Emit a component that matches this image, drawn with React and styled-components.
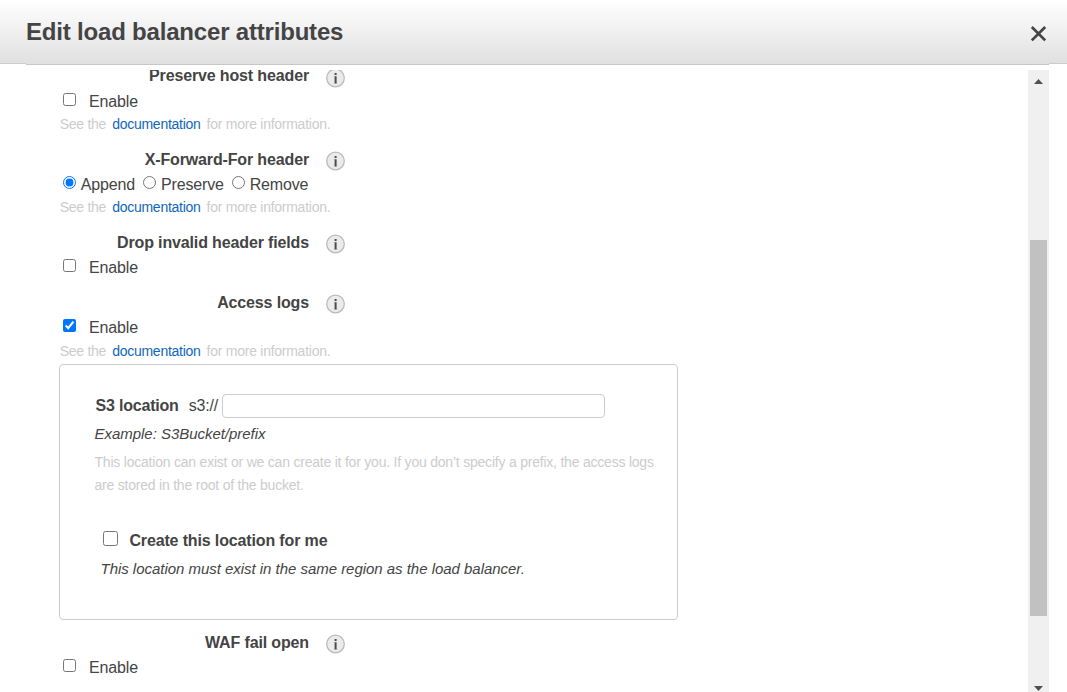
import React from "react";
import styled, { createGlobalStyle } from "styled-components";

const GlobalStyle = createGlobalStyle`
  * { box-sizing: border-box; }
  body {
    margin: 0;
    overflow: hidden;
    background: #fff;
    color: #444;
    font-family: "Liberation Sans", Arial, sans-serif;
    font-size: 16px;
    letter-spacing: -0.14px;
  }
`;

const Dialog = styled.div`
  display: flex;
  flex-direction: column;
  width: 1067px;
  height: 692px;
`;

const Header = styled.header`
  flex: none;
  height: 64px;
  padding: 0 18px 0 26px;
  border-bottom: 1px solid #ccc;
  background: linear-gradient(#fff, #e0e0e0);
`;

const TitleBar = styled.div`
  display: flex;
  justify-content: space-between;
  height: 65px;
  border-bottom: 1px solid #c6c6c6;
  background: linear-gradient(#fff, #e0e0e0);
`;

const Title = styled.h1`
  margin: 0;
  font-size: 24px;
  line-height: 28px;
  padding-top: 18px;
  white-space: nowrap;
  letter-spacing: -0.19px;
`;

const CloseButton = styled.button`
  display: block;
  width: 17px;
  height: 17px;
  margin: 25px 2px 0 0;
  padding: 0;
  border: 0;
  background: none;
  svg { display: block; }
`;

const Content = styled.div`
  display: flex;
  justify-content: space-between;
  flex: 1;
  min-height: 0;
  margin-top: 6px;
  padding-right: 18px;
  overflow: hidden;
`;

const Form = styled.form`
  width: 620px;
  margin: -7px 0 0 59px;
`;

const Field = styled.section`
  margin-bottom: ${(p) => p.$gap ?? 11}px;
`;

const LabelRow = styled.div`
  display: flex;
  justify-content: space-between;
  width: 286px;
  height: 26px;
`;

const Label = styled.div`
  width: 250px;
  text-align: right;
  font-weight: bold;
  line-height: ${(p) => p.$line ?? 28}px;
  white-space: nowrap;
`;

const InfoIcon = styled.svg`
  display: block;
  width: 20px;
  height: 20px;
  margin-top: 5px;
`;

const ChoiceRow = styled.div`
  display: flex;
  height: 24px;
  padding-left: 4px;
  line-height: 26px;
`;

const Choice = styled.label`
  display: flex;
  gap: ${(p) => p.$gap}px;
  margin-right: 8px;
  white-space: nowrap;
`;

const Tick = styled.input`
  flex: none;
  width: ${(p) => p.$size ?? 13}px;
  height: ${(p) => p.$size ?? 13}px;
  margin: ${(p) => p.$top ?? 4}px 0 0;
`;

const Help = styled.div`
  height: 22px;
  margin-top: ${(p) => p.$top ?? 0}px;
  padding-left: 0.7px;
  color: #ccc;
  font-size: 14px;
  line-height: 22px;
  letter-spacing: -0.26px;
  white-space: pre;
`;

const DocLink = styled.a`
  margin: 0 6px;
  color: #1166bb;
`;

const LocationBox = styled.div`
  width: 619px;
  height: 256px;
  margin-top: 2px;
  padding: 29px 0 0 35px;
  border: 1px solid #ccc;
  border-radius: 4px;
`;

const LocationRow = styled.div`
  display: flex;
  height: 24px;
  padding-left: 0.5px;
  line-height: 24px;
  white-space: nowrap;
  letter-spacing: -0.2px;
`;

const Prefix = styled.span`
  margin: 0 4px 0 10px;
`;

const LocationInput = styled.input`
  width: 383px;
  height: 24px;
  padding: 0 6px;
  border: 1px solid #ccc;
  border-radius: 4px;
`;

const Example = styled.div`
  margin: ${(p) => p.$top ?? 5}px 0 0 ${(p) => p.$indent ?? -0.5}px;
  font-size: 15px;
  font-style: italic;
  line-height: 22px;
  white-space: nowrap;
  letter-spacing: -0.03px;
`;

const Note = styled.p`
  margin: 6px 0 0 -0.5px;
  color: #ccc;
  font-size: 14px;
  line-height: 23px;
  white-space: nowrap;
  letter-spacing: -0.215px;
`;

const CreateChoice = styled.label`
  display: flex;
  gap: 11.4px;
  height: 24px;
  margin: 31px 0 0 8px;
  font-weight: bold;
  line-height: 26px;
`;

const Scrollbar = styled.div`
  display: flex;
  flex-direction: column;
  align-items: center;
  width: 21px;
  background: #f0f0f0;
`;

const Arrow = styled.svg`
  display: block;
  width: 9px;
  height: 5px;
  margin-top: ${(p) => p.$top}px;
`;

const Thumb = styled.div`
  width: 17px;
  height: 376px;
  margin-top: 156px;
  background: #c1c1c1;
`;

const Info = () => (
  <InfoIcon viewBox="0 0 20 20">
    <circle cx="10.5" cy="10" r="8.8" fill="#ebebeb" stroke="#bbb" strokeWidth="1.3" />
    <path d="M8.5 8.5h2M8.5 15h4.5" fill="none" stroke="#d4d4d4" strokeWidth="1" />
    <path d="M9.6 5h2v2h-2zM9.6 8.2h2v7.3h-2z" fill="#4a4a4a" />
  </InfoIcon>
);

const FieldLabel = ({ children, line }) => (
  <LabelRow>
    <Label $line={line}>{children}</Label>
    <Info />
  </LabelRow>
);

const Enable = ({ checked }) => (
  <ChoiceRow>
    <Choice $gap={13}>
      <Tick type="checkbox" defaultChecked={checked} />
      Enable
    </Choice>
  </ChoiceRow>
);

const HelpText = ({ top }) => (
  <Help $top={top}>
    See the<DocLink>documentation</DocLink>for more information.
  </Help>
);

export default function App() {
  return (
    <>
      <GlobalStyle />
      <Dialog>
        <Header>
          <TitleBar>
            <Title>Edit load balancer attributes</Title>
            <CloseButton type="button" aria-label="Close">
              <svg width="17" height="17" viewBox="0 0 17 17">
                <path d="M1.8 2l13.4 13.4M15.2 2l-13.4 13.4" stroke="#444" strokeWidth="2.7" />
              </svg>
            </CloseButton>
          </TitleBar>
        </Header>
        <Content>
          <Form>
            <Field>
              <FieldLabel line={26}>Preserve host header</FieldLabel>
              <Enable />
              <HelpText />
            </Field>
            <Field>
              <FieldLabel>X-Forward-For header</FieldLabel>
              <ChoiceRow>
                {["Append", "Preserve", "Remove"].map((name) => (
                  <Choice key={name} $gap={4.8}>
                    <Tick type="radio" name="xff" defaultChecked={name === "Append"} />
                    {name}
                  </Choice>
                ))}
              </ChoiceRow>
              <HelpText />
            </Field>
            <Field $gap={10}>
              <FieldLabel>Drop invalid header fields</FieldLabel>
              <Enable />
            </Field>
            <Field $gap={9}>
              <FieldLabel>Access logs</FieldLabel>
              <Enable checked />
              <HelpText top={1} />
              <LocationBox>
                <LocationRow>
                  <strong>S3 location</strong>
                  <Prefix>s3://</Prefix>
                  <LocationInput type="text" />
                </LocationRow>
                <Example>Example: S3Bucket/prefix</Example>
                <Note>
                  This location can exist or we can create it for you. If you don’t specify a prefix, the access logs
                  <br />
                  are stored in the root of the bucket.
                </Note>
                <CreateChoice>
                  <Tick type="checkbox" $size={15} $top={3} />
                  Create this location for me
                </CreateChoice>
                <Example $indent={5.5} $top={6}>
                  This location must exist in the same region as the load balancer.
                </Example>
              </LocationBox>
            </Field>
            <Field>
              <FieldLabel>WAF fail open</FieldLabel>
              <Enable />
            </Field>
          </Form>
          <Scrollbar>
            <Arrow viewBox="0 0 9 5" $top={9}>
              <path d="M0 5l4.5-5L9 5z" fill="#505050" />
            </Arrow>
            <Thumb />
            <Arrow viewBox="0 0 9 5" $top={70}>
              <path d="M0 0l4.5 5L9 0z" fill="#505050" />
            </Arrow>
          </Scrollbar>
        </Content>
      </Dialog>
    </>
  );
}
